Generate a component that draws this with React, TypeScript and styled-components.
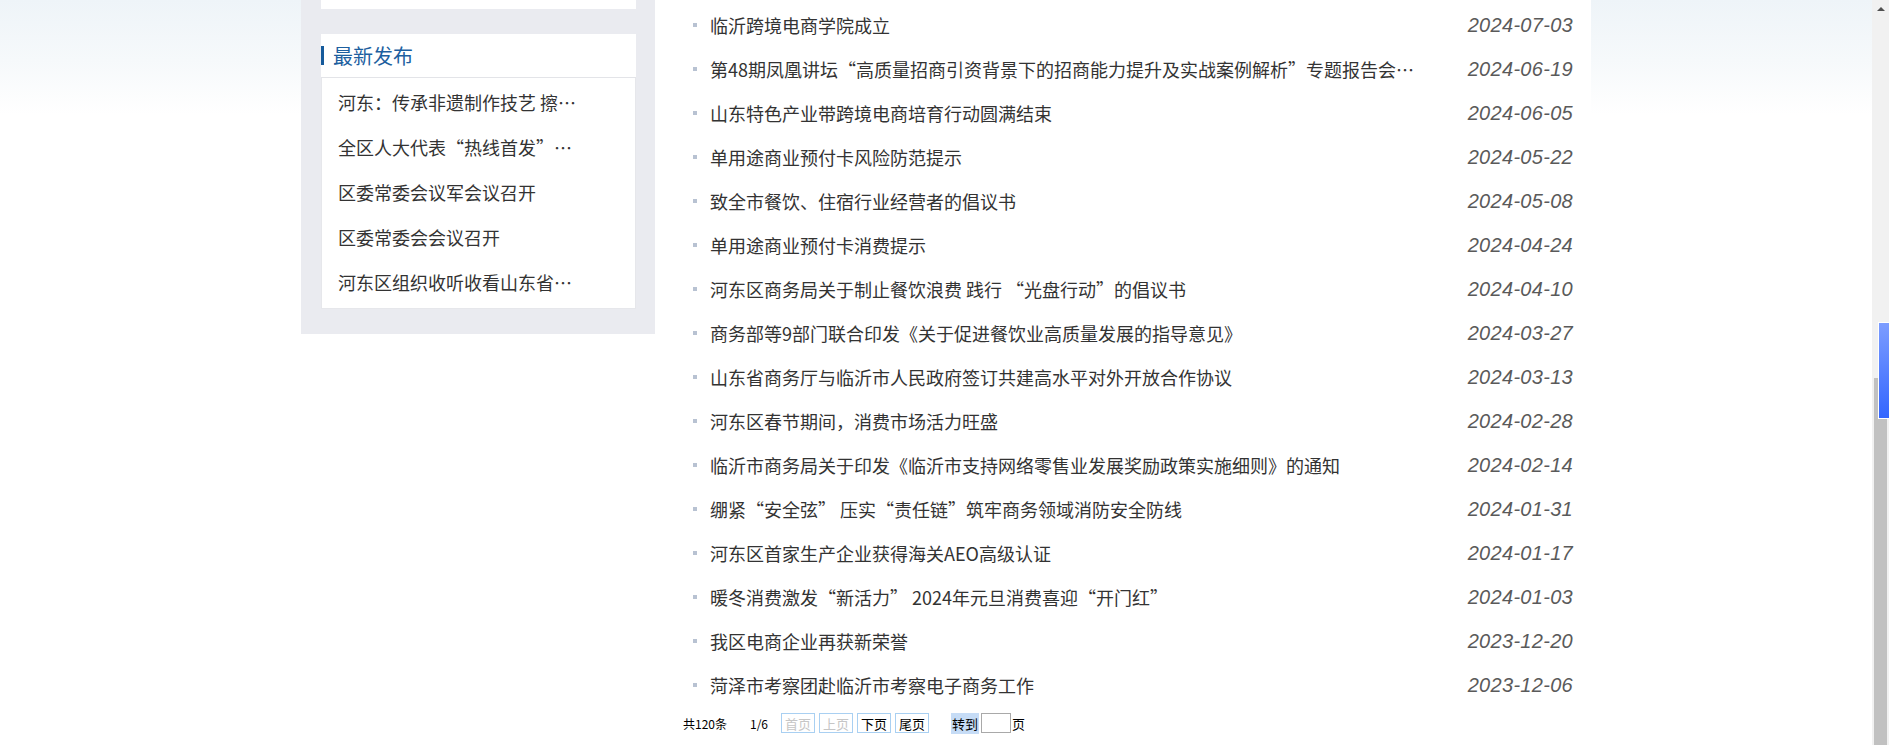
import styled, { createGlobalStyle } from "styled-components"

const GlobalStyle = createGlobalStyle`
html, body {
  margin: 0;
  padding: 0;
  overflow: hidden;
  background: #fff;
}
* { box-sizing: border-box; }
`

const cjk = `"Noto Sans CJK SC", "Liberation Sans", sans-serif`

const Page = styled.div`
display: flex;
height: 745px;
overflow: hidden;
font-family: ${cjk};
background: linear-gradient(180deg, #eef4f8 0px, #f6f9fb 60px, #ffffff 115px);`
const Viewport = styled.div`
flex: 1;
height: 100%;
overflow: hidden;`
const Container = styled.div`
margin-left: 301px;
width: 1290px;
display: flex;
align-items: flex-start;`

const Sidebar = styled.aside`
width: 354px;
flex-shrink: 0;
background: #eaebf0;
padding: 0 19px 25px 20px;`
const CardTail = styled.div`
height: 9px;
background: #fff;`
const PanelHead = styled.div`
margin-top: 25px;
height: 44px;
background: #fff;
display: flex;
align-items: center;
border-bottom: 1px solid #e3e4e8;`
const Accent = styled.span`
width: 3px;
height: 19px;
background: #155a9b;`
const PanelTitle = styled.h2`
margin: 0 0 0 9px;
font-size: 20px;
font-weight: normal;
color: #1d5f9f;
line-height: 1;`
const SideList = styled.ul`
list-style: none;
margin: 0;
padding: 2px 0 3px;
background: #fff;
border: 1px solid #e6e7eb;
border-top: none;`
const SideItem = styled.li`
height: 45px;
line-height: 45px;
padding-left: 16px;
width: 258px;
font-size: 18px;
color: #333;
white-space: nowrap;
overflow: hidden;
text-overflow: ellipsis;`

const Main = styled.main`
flex: 1;
height: 745px;
background: #fff;
padding: 3px 18px 0 28px;`
const NewsList = styled.ul`
list-style: none;
margin: 0;
padding: 0;`
const NewsRow = styled.li`
height: 44px;
display: flex;
align-items: center;
padding-left: 10px;`
const Bullet = styled.span`
width: 4px;
height: 4px;
background: #b8c2d2;
margin-right: 13px;
flex-shrink: 0;`
const NewsTitle = styled.span`
max-width: 716px;
font-size: 18px;
color: #333;
white-space: nowrap;
overflow: hidden;
text-overflow: ellipsis;`
const NewsDate = styled.span`
margin-left: auto;
font-size: 20px;
font-style: italic;
letter-spacing: 0.3px;
color: #5a5a5a;
font-family: "Liberation Sans", sans-serif;`

const Pager = styled.div`
height: 32px;
display: flex;
align-items: center;
font-size: 12px;
color: #000;`
const PagerText = styled.span<{ $gap?: number }>`
margin-right: ${p => p.$gap ?? 0}px;`
const PageBtn = styled.span<{ $off?: boolean }>`
width: 34px;
height: 20px;
border: 1px solid #a9d0f2;
display: flex;
align-items: center;
justify-content: center;
font-size: 13px;
margin-right: 4px;
color: ${p => (p.$off ? "#c6c6c6" : "#000")};`
const GoLabel = styled.span`
margin-left: 18px;
font-size: 13px;
background: #c6dcf6;
padding: 1px 1px;
margin-right: 2px;`
const GoInput = styled.span`
width: 30px;
height: 20px;
border: 1px solid #a9a9a9;
background: #fff;`
const GoUnit = styled.span`
font-size: 13px;
margin-left: 1px;`

const Scrollbar = styled.div`
width: 17px;
height: 100%;
background: #f1f1f1;
position: relative;
display: flex;
flex-direction: column;
align-items: center;`
const ArrowUp = styled.div`
margin-top: 7px;
width: 0;
height: 0;
border-left: 4px solid transparent;
border-right: 4px solid transparent;
border-bottom: 4px solid #505050;`
const Thumb = styled.div`
margin-top: 367px;
width: 13px;
flex: 1;
background: #c1c1c1;`
const FloatTab = styled.div`
position: absolute;
top: 322px;
right: 0;
width: 11px;
height: 97px;
border: 1px solid #fff;
border-right: none;
background: linear-gradient(180deg, #7c9dff, #3366ff);`

const sideNews = [
  "河东：传承非遗制作技艺 擦亮“老字号”招牌",
  "全区人大代表“热线首发”活动启动",
  "区委常委会议军会议召开",
  "区委常委会会议召开",
  "河东区组织收听收看山东省安全生产会议",
]

const news = [
  ["临沂跨境电商学院成立", "2024-07-03"],
  ["第48期凤凰讲坛“高质量招商引资背景下的招商能力提升及实战案例解析”专题报告会举行", "2024-06-19"],
  ["山东特色产业带跨境电商培育行动圆满结束", "2024-06-05"],
  ["单用途商业预付卡风险防范提示", "2024-05-22"],
  ["致全市餐饮、住宿行业经营者的倡议书", "2024-05-08"],
  ["单用途商业预付卡消费提示", "2024-04-24"],
  ["河东区商务局关于制止餐饮浪费 践行 “光盘行动”的倡议书", "2024-04-10"],
  ["商务部等9部门联合印发《关于促进餐饮业高质量发展的指导意见》", "2024-03-27"],
  ["山东省商务厅与临沂市人民政府签订共建高水平对外开放合作协议", "2024-03-13"],
  ["河东区春节期间，消费市场活力旺盛", "2024-02-28"],
  ["临沂市商务局关于印发《临沂市支持网络零售业发展奖励政策实施细则》的通知", "2024-02-14"],
  ["绷紧“安全弦” 压实“责任链”筑牢商务领域消防安全防线", "2024-01-31"],
  ["河东区首家生产企业获得海关AEO高级认证", "2024-01-17"],
  ["暖冬消费激发“新活力” 2024年元旦消费喜迎“开门红”", "2024-01-03"],
  ["我区电商企业再获新荣誉", "2023-12-20"],
  ["菏泽市考察团赴临沂市考察电子商务工作", "2023-12-06"],
]

const App = () => {
  return (
    <>
      <GlobalStyle />
      <Page>
        <Viewport>
          <Container>
            <Sidebar>
              <CardTail />
              <PanelHead>
                <Accent />
                <PanelTitle>最新发布</PanelTitle>
              </PanelHead>
              <SideList>
                {sideNews.map(t => (
                  <SideItem key={t}>{t}</SideItem>
                ))}
              </SideList>
            </Sidebar>
            <Main>
              <NewsList>
                {news.map(([title, date]) => (
                  <NewsRow key={date}>
                    <Bullet />
                    <NewsTitle>{title}</NewsTitle>
                    <NewsDate>{date}</NewsDate>
                  </NewsRow>
                ))}
              </NewsList>
              <Pager>
                <PagerText $gap={23}>共120条</PagerText>
                <PagerText $gap={13}>1/6</PagerText>
                <PageBtn $off>首页</PageBtn>
                <PageBtn $off>上页</PageBtn>
                <PageBtn>下页</PageBtn>
                <PageBtn>尾页</PageBtn>
                <GoLabel>转到</GoLabel>
                <GoInput />
                <GoUnit>页</GoUnit>
              </Pager>
            </Main>
          </Container>
        </Viewport>
        <Scrollbar>
          <ArrowUp />
          <Thumb />
          <FloatTab />
        </Scrollbar>
      </Page>
    </>
  )
}

export default App
